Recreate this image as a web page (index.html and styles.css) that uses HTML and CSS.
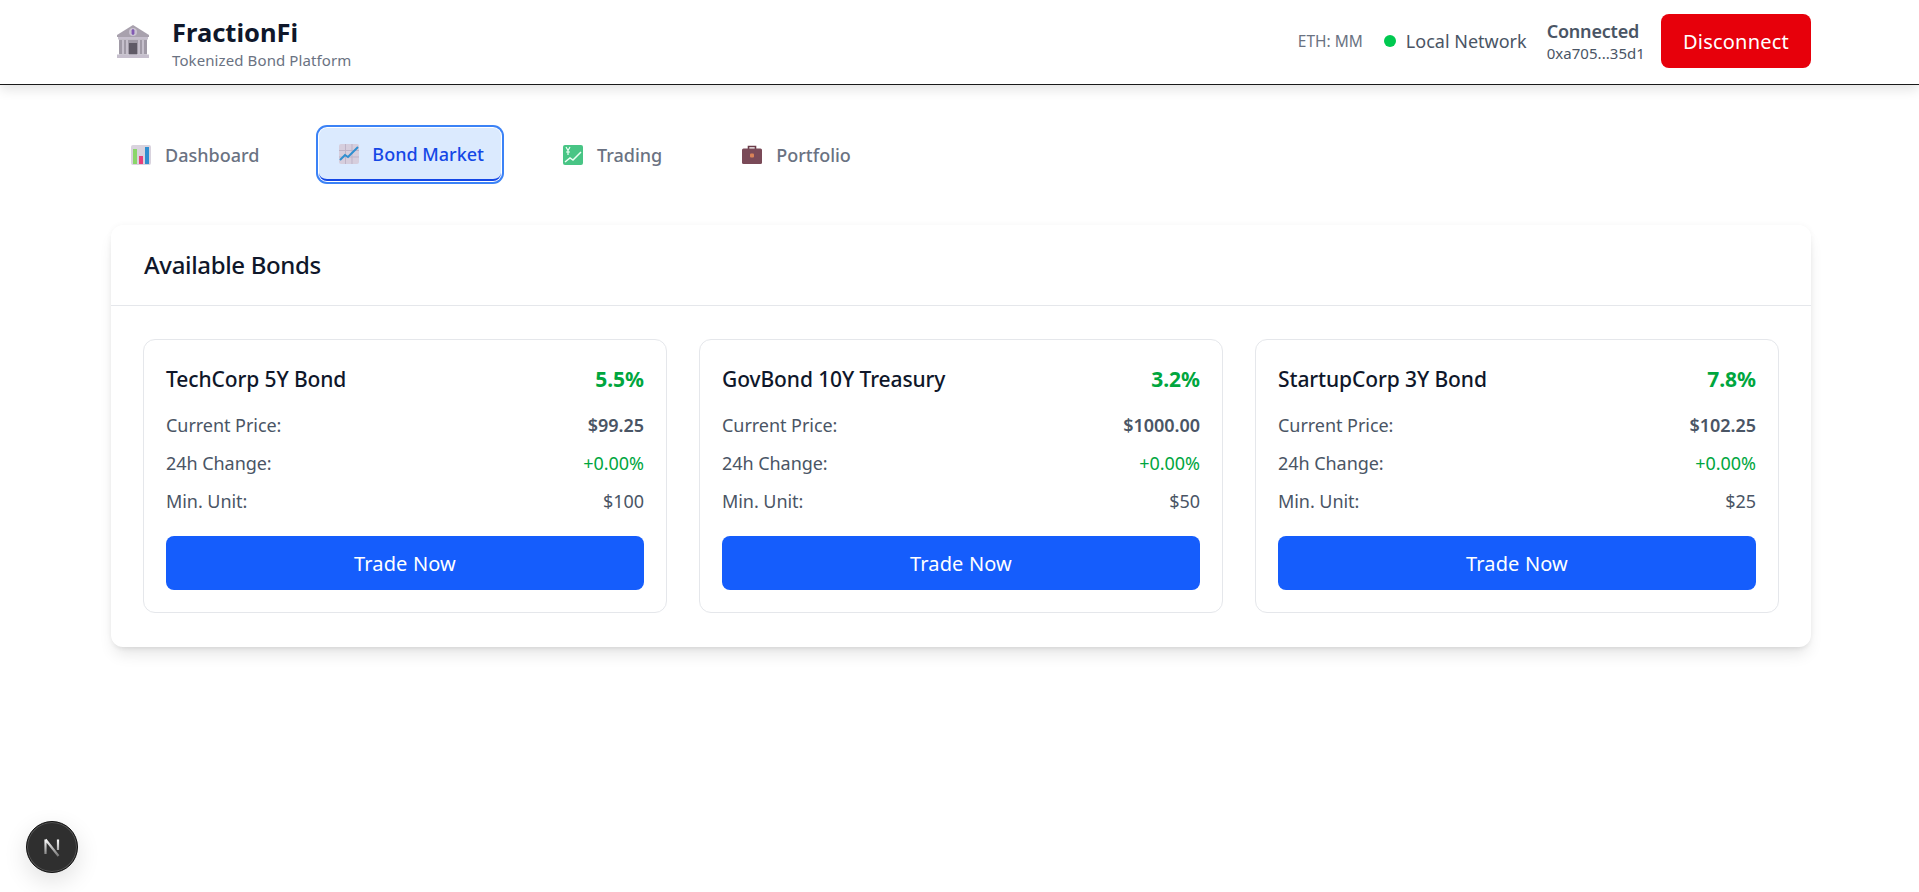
FILE: index.html
```html
<!DOCTYPE html>
<html>
<head>
<meta name="viewport" content="width=device-width, initial-scale=1">
<title>FractionFi</title>
<link rel="stylesheet" href="styles.css">
</head>
<body>

<header class="topbar">
  <div class="wrap topbar-row">
    <div class="brand">
      <svg class="brand-icon" viewBox="0 0 36 36">
        <path d="M18 1 L34 11 V13 H2 V11 Z" fill="#a8a1ad"/>
        <circle cx="18" cy="8" r="4" fill="#c9c2d0"/>
        <path d="M18 5 V11 M16.5 7 H19.5 M16.5 9 H19.5" stroke="#7a4fb0" stroke-width="1.3"/>
        <rect x="3" y="13" width="30" height="2.5" fill="#c6bfcd"/>
        <rect x="4" y="15.5" width="28" height="15" fill="#a09aa6"/>
        <path d="M8 16 V30 M12 16 V30 M24 16 V30 M28 16 V30" stroke="#c6c0cc" stroke-width="2"/>
        <rect x="14" y="19" width="8" height="11.500" fill="#5f5a66"/>
        <rect x="2" y="30.500" width="32" height="3.500" fill="#c6bfcd"/>
      </svg>
      <div class="brand-text">
        <h1 class="brand-name">FractionFi</h1>
        <p class="brand-sub">Tokenized Bond Platform</p>
      </div>
    </div>
    <div class="status">
      <span class="eth">ETH: MM</span>
      <span class="network"><i class="dot"></i>Local Network</span>
      <div class="account">
        <div class="account-state">Connected</div>
        <div class="account-addr">0xa705...35d1</div>
      </div>
      <button class="disconnect">Disconnect</button>
    </div>
  </div>
</header>

<div class="wrap content">
  <nav class="tabs">
    <a class="tab">
      <svg class="tab-icon" viewBox="0 0 20 20">
        <rect width="20" height="20" rx="2" fill="#d9d3de"/>
        <rect x="2" y="4" width="4" height="15" fill="#8ad66a"/>
        <rect x="8" y="11" width="4" height="8" fill="#e8407a"/>
        <rect x="14" y="2" width="4" height="17" fill="#2f8fd0"/>
      </svg>
      Dashboard
    </a>
    <a class="tab tab-active">
      <svg class="tab-icon" viewBox="0 0 20 20">
        <rect width="20" height="20" rx="2" fill="#d6cedd"/>
        <path d="M0 6.500 H20 M0 13 H20 M6.500 0 V20 M13 0 V20" stroke="#bdb3c7" stroke-width="1"/>
        <path d="M1 16 L6 11 L9 13 L19 3" fill="none" stroke="#2f8fd0" stroke-width="2"/>
      </svg>
      Bond Market
    </a>
    <a class="tab">
      <svg class="tab-icon" viewBox="0 0 20 20">
        <rect width="20" height="20" rx="2" fill="#48c585"/>
        <path d="M2 17 L7 13 L10 15 L18 7" fill="none" stroke="#eafff3" stroke-width="1.500"/>
        <path d="M3 2 L5 5.500 L7 2 M5 5.500 V10 M3 7 H7" fill="none" stroke="#eafff3" stroke-width="1.200"/>
      </svg>
      Trading
    </a>
    <a class="tab">
      <svg class="tab-icon" viewBox="0 0 20 20">
        <path d="M6.500 4 V1.500 H13.500 V4" fill="none" stroke="#6b3d4a" stroke-width="1.600"/>
        <rect y="3.500" width="20" height="15.500" rx="1.500" fill="#7a4a58"/>
        <rect x="8" y="8.500" width="4" height="4" rx="1" fill="#d98358"/>
      </svg>
      Portfolio
    </a>
  </nav>

  <section class="panel">
    <h2 class="panel-title">Available Bonds</h2>
    <div class="bond-grid">

      <div class="bond">
        <div class="bond-head">
          <h3 class="bond-name">TechCorp 5Y Bond</h3>
          <span class="bond-rate">5.5%</span>
        </div>
        <div class="bond-row"><span>Current Price:</span><span class="price">$99.25</span></div>
        <div class="bond-row"><span>24h Change:</span><span class="change">+0.00%</span></div>
        <div class="bond-row"><span>Min. Unit:</span><span>$100</span></div>
        <button class="trade">Trade Now</button>
      </div>

      <div class="bond">
        <div class="bond-head">
          <h3 class="bond-name">GovBond 10Y Treasury</h3>
          <span class="bond-rate">3.2%</span>
        </div>
        <div class="bond-row"><span>Current Price:</span><span class="price">$1000.00</span></div>
        <div class="bond-row"><span>24h Change:</span><span class="change">+0.00%</span></div>
        <div class="bond-row"><span>Min. Unit:</span><span>$50</span></div>
        <button class="trade">Trade Now</button>
      </div>

      <div class="bond">
        <div class="bond-head">
          <h3 class="bond-name">StartupCorp 3Y Bond</h3>
          <span class="bond-rate">7.8%</span>
        </div>
        <div class="bond-row"><span>Current Price:</span><span class="price">$102.25</span></div>
        <div class="bond-row"><span>24h Change:</span><span class="change">+0.00%</span></div>
        <div class="bond-row"><span>Min. Unit:</span><span>$25</span></div>
        <button class="trade">Trade Now</button>
      </div>

    </div>
  </section>
</div>

<div class="dev-badge">
  <svg viewBox="0 0 24 24" width="24" height="24">
    <defs>
      <linearGradient id="fadeN" x1="0" y1="0" x2="0" y2="1">
        <stop offset="0" stop-color="#fff"/>
        <stop offset="1" stop-color="#fff" stop-opacity="0.35"/>
      </linearGradient>
    </defs>
    <path d="M5.500 4.500 V19 M5.500 4.500 L18.500 21 M18 4.500 V15" fill="none" stroke="url(#fadeN)" stroke-width="2.200"/>
  </svg>
</div>

</body>
</html>
```

FILE: styles.css
```css
* {
  box-sizing: border-box;
}

html, body {
  height: 100%;
}

body {
  margin: 0;
  background: #fff;
  font-family: "Noto Sans", "Open Sans", sans-serif;
  color: #4a5565;
}

h1, h2, h3, p {
  margin: 0;
}

button {
  border: none;
  font-family: inherit;
  cursor: pointer;
}

.wrap {
  width: 1700px;
  margin-left: 111px;
}

.content {
  padding-bottom: 60px;
}

/* Top bar */
.topbar {
  height: 85px;
  border-bottom: 1px solid #1a1a1a;
  box-shadow: 0 4px 12px rgba(0, 0, 0, 0.12);
}

.topbar-row {
  height: 82px;
  display: flex;
  align-items: center;
  justify-content: space-between;
}

.brand {
  display: flex;
  align-items: center;
  gap: 21px;
}

.brand-icon {
  width: 36px;
  height: 36px;
  margin-left: 4px;
  margin-top: 2px;
}

.brand-text {
  padding-top: 3px;
}

.brand-name {
  font-size: 25.500px;
  line-height: 32px;
  font-weight: 700;
  color: #0f172a;
}

.brand-sub {
  margin-top: 2px;
  font-size: 15px;
  line-height: 20px;
  color: #6a7282;
  letter-spacing: 0.1px;
}

.status {
  display: flex;
  align-items: center;
}

.eth {
  font-size: 15.500px;
  color: #6a7282;
  margin-right: 21px;
}

.network {
  display: flex;
  align-items: center;
  font-size: 18px;
  margin-right: 20px;
}

.dot {
  width: 12px;
  height: 12px;
  border-radius: 50%;
  background: #00c950;
  margin-right: 10px;
}

.account {
  margin-right: 16px;
}

.account-state {
  font-size: 18px;
  line-height: 24px;
  font-weight: 600;
  letter-spacing: -0.2px;
}

.account-addr {
  font-size: 15px;
  line-height: 20px;
  letter-spacing: 0.05px;
}

.disconnect {
  width: 150px;
  height: 54px;
  border-radius: 8px;
  background: #e7000b;
  color: #fff;
  font-size: 20px;
  letter-spacing: 0.2px;
}

/* Tabs */
.tabs {
  display: flex;
  align-items: center;
  gap: 40px;
  margin-top: 43px;
}

.tab {
  display: flex;
  align-items: center;
  gap: 14px;
  height: 53px;
  padding: 0 20px;
  font-size: 18px;
  font-weight: 500;
  color: #6a7282;
  border-radius: 8px;
}

.tab-icon {
  width: 20px;
  height: 20px;
}

.tab-active {
  gap: 13px;
  padding-right: 17px;
  margin-right: 2px;
  background: #dbeafe;
  color: #1447e6;
  border-bottom: 2px solid #1447e6;
  box-shadow: 0 0 0 1px #fff, 0 0 0 3px #3b82f6;
}

/* Available bonds panel */
.panel {
  margin-top: 44px;
  border-radius: 12px;
  background: #fff;
  box-shadow: 0 10px 15px -3px rgba(0, 0, 0, 0.1), 0 4px 6px -4px rgba(0, 0, 0, 0.1), 0 0 6px rgba(0, 0, 0, 0.04);
}

.panel-title {
  height: 81px;
  padding: 0 33px;
  line-height: 80px;
  font-size: 24px;
  font-weight: 500;
  color: #0f172a;
  letter-spacing: -0.35px;
  border-bottom: 1px solid #e5e7eb;
}

.bond-grid {
  display: grid;
  grid-template-columns: repeat(3, 1fr);
  gap: 32px;
  padding: 33px 32px 34px;
}

.bond {
  border: 1px solid #e5e7eb;
  border-radius: 12px;
  padding: 25px 22px 22px;
}

.bond-head {
  display: flex;
  justify-content: space-between;
  align-items: center;
  height: 28px;
  margin-bottom: 13px;
}

.bond-name {
  font-size: 21px;
  font-weight: 500;
  color: #0f172a;
  letter-spacing: -0.1px;
}

.bond-rate {
  font-size: 21px;
  font-weight: 700;
  color: #00a63e;
}

.bond-row {
  display: flex;
  justify-content: space-between;
  align-items: center;
  height: 38px;
  font-size: 18px;
  letter-spacing: -0.05px;
}

.price {
  font-weight: 600;
}

.change {
  color: #00a63e;
}

.trade {
  display: block;
  width: 100%;
  height: 54px;
  margin-top: 16px;
  border-radius: 8px;
  background: #155dfc;
  color: #fff;
  font-size: 20px;
  letter-spacing: 0.15px;
}

/* Dev indicator */
.dev-badge {
  position: fixed;
  left: 26px;
  bottom: 19px;
  width: 52px;
  height: 52px;
  border-radius: 50%;
  background: #2f2f2f;
  border: 1px solid #111;
  box-shadow: inset 0 0 0 1px #555, 0 8px 24px rgba(0, 0, 0, 0.12);
  display: flex;
  align-items: center;
  justify-content: center;
}
```
